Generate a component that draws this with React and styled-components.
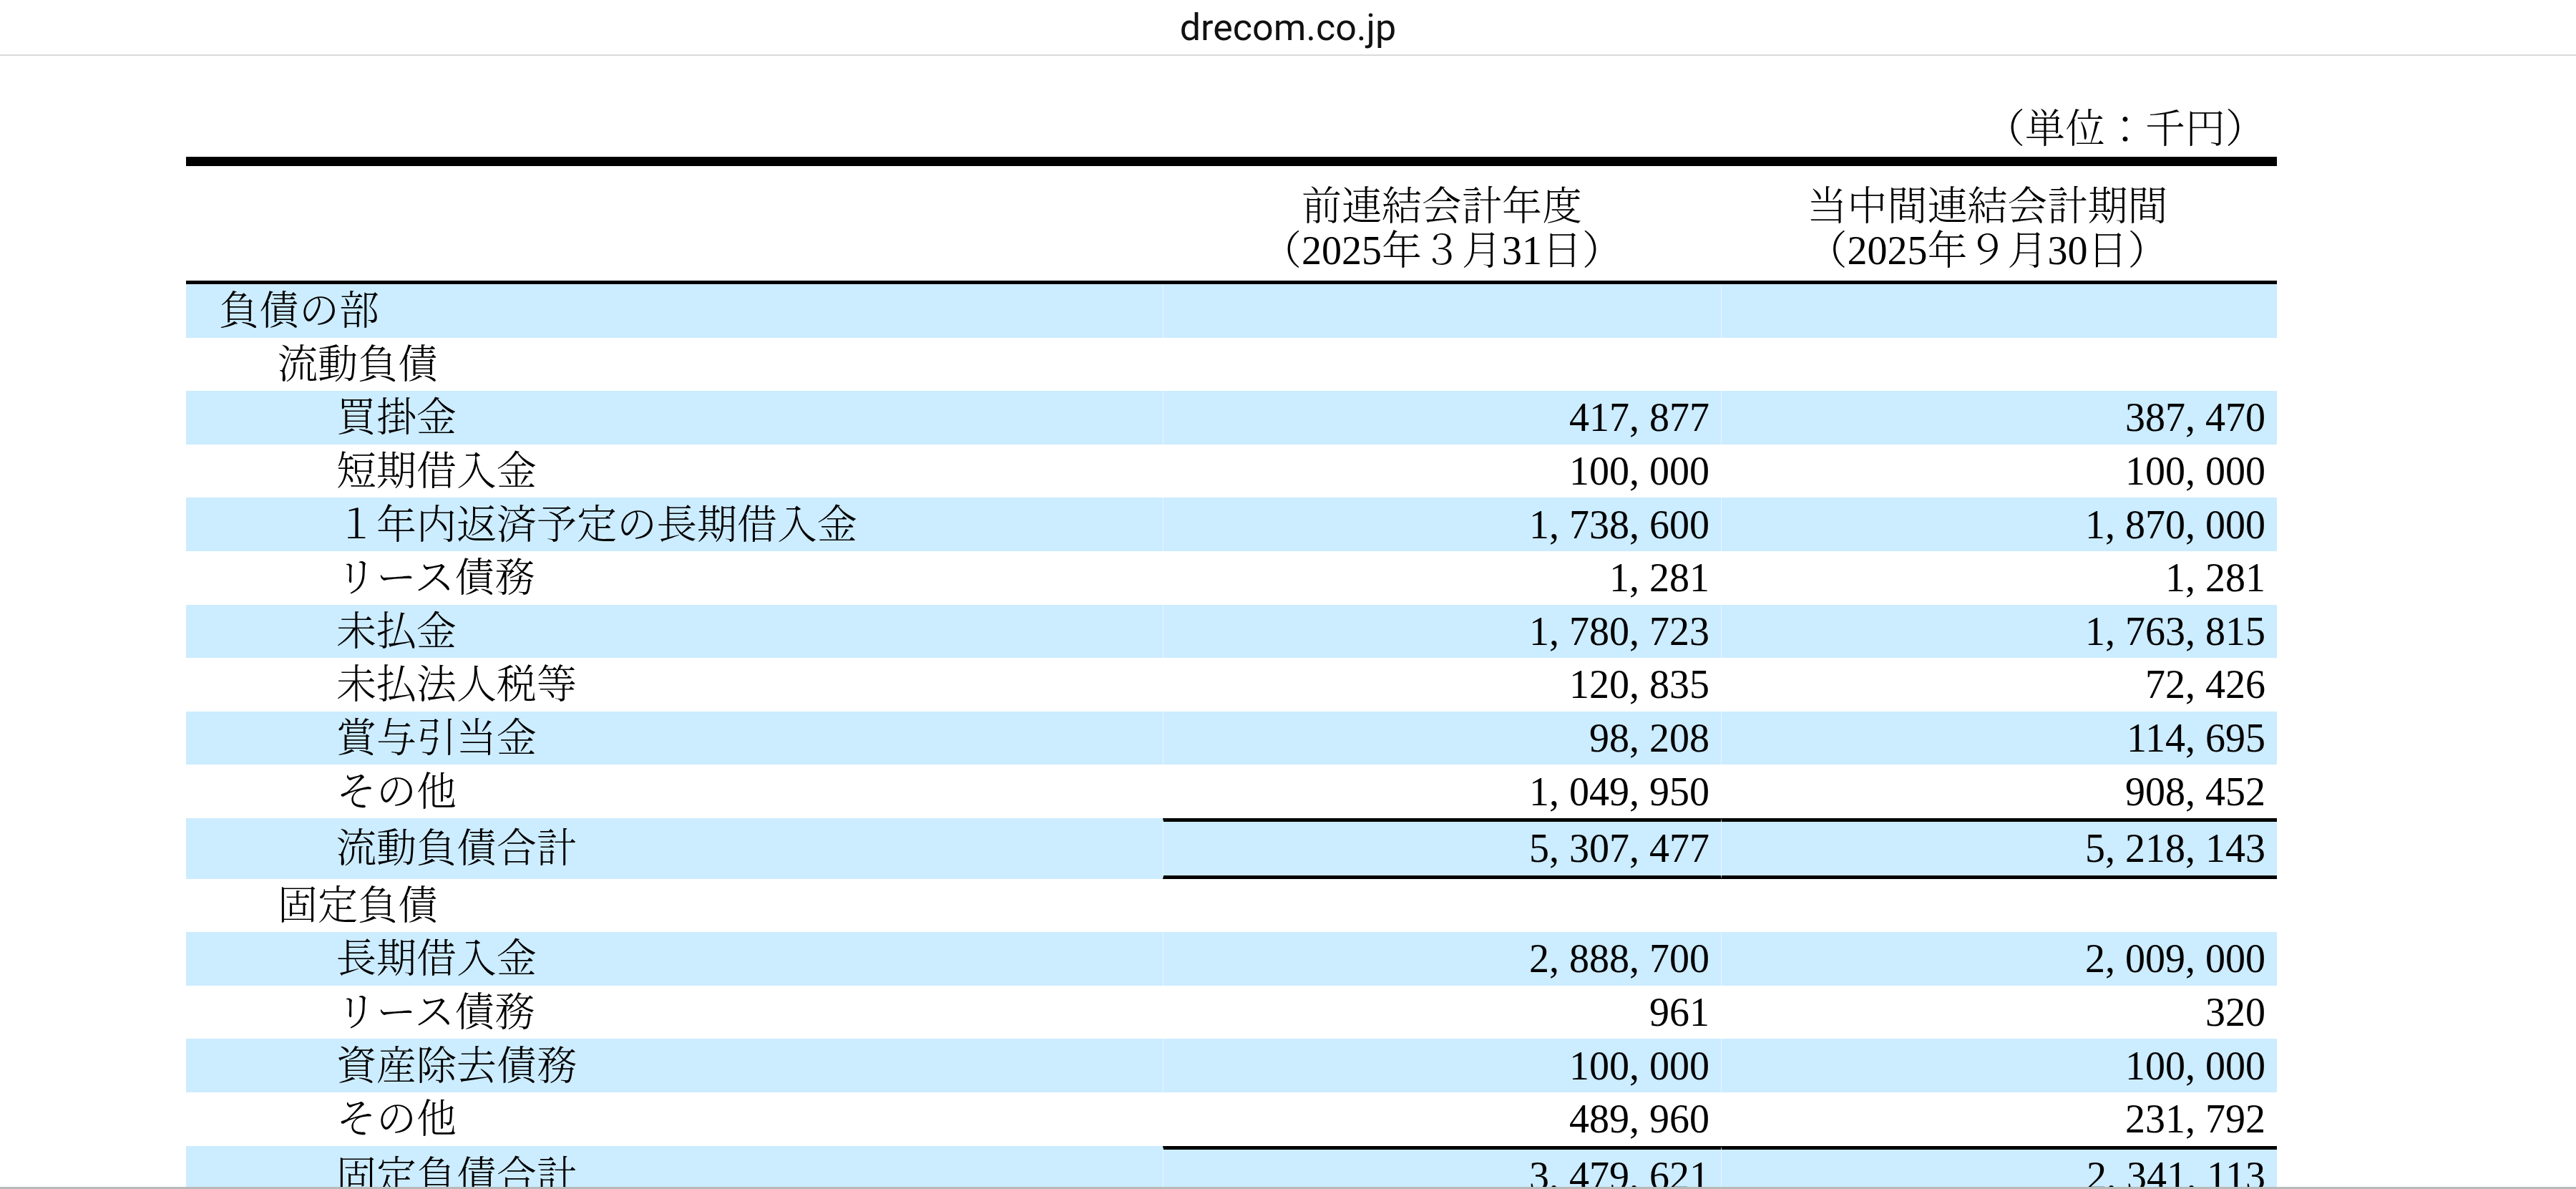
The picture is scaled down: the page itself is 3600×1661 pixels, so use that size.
import React from "react"
import styled, { createGlobalStyle } from "styled-components"

const SERIF = `"Liberation Serif", "Noto Serif CJK JP", "Noto Sans CJK JP", serif`
const BLUE = "#ccecff"
const ROW_H = "74.6px"

const GlobalStyle = createGlobalStyle`
  html, body {
    margin: 0;
    padding: 0;
    background: #ffffff;
    overflow: hidden;
  }
`

const Page = styled.div`
  width: 3600px;
  height: 1661px;
  overflow: hidden;
  background: #ffffff;
`

const AddressBar = styled.div`
  height: 76px;
  border-bottom: 2px solid #dadada;
  display: flex;
  align-items: center;
  justify-content: center;
  font-family: Roboto, "Liberation Sans", sans-serif;
  font-size: 52px;
  color: #111111;
`

const Sheet = styled.div`
  width: 2922px;
  margin-left: 260px;
  font-family: ${SERIF};
  font-weight: 300;
  font-size: 56px;
  color: #000000;
`

const Unit = styled.div`
  margin: 71px 0 8px;
  line-height: 62px;
  text-align: right;
  padding-right: 16px;
`

const Table = styled.div`
  border-top: 13px solid #000000;
`

const Row = styled.div`
  display: grid;
  grid-template-columns: 1365px 780px 777px;
  background: ${(p) => (p.shaded ? BLUE : "#ffffff")};
`

const HeadRow = styled(Row)`
  height: 160px;
  border-bottom: 5px solid #000000;
`

const HeadCell = styled.div`
  display: flex;
  flex-direction: column;
  align-items: center;
  justify-content: center;
  line-height: 62px;
  padding-top: 14px;
  padding-right: ${(p) => p.shift || 0}px;
`

const Label = styled.div`
  display: flex;
  align-items: center;
  min-height: ${ROW_H};
  line-height: 1;
  padding-left: ${(p) => 46 + p.level * 82}px;
  white-space: nowrap;
`

const Amount = styled.div`
  display: flex;
  align-items: center;
  justify-content: flex-end;
  min-height: ${ROW_H};
  line-height: 1;
  padding-right: 16px;
  border-left: 1px solid ${(p) => (p.shaded ? "rgba(255,255,255,0.55)" : "transparent")};
  border-top: ${(p) => (p.total ? "5px solid #000000" : "none")};
  border-bottom: ${(p) => (p.total ? "5px solid #000000" : "none")};
  white-space: nowrap;
`

const Comma = styled.span`
  display: inline-block;
  width: 0.5em;
`

const BottomEdge = styled.div`
  position: fixed;
  left: 0;
  right: 0;
  bottom: 0;
  height: 3px;
  background: #b9b9b9;
`

const rows = [
  { label: "負債の部", level: 0 },
  { label: "流動負債", level: 1 },
  { label: "買掛金", level: 2, prev: "417,877", cur: "387,470" },
  { label: "短期借入金", level: 2, prev: "100,000", cur: "100,000" },
  { label: "１年内返済予定の長期借入金", level: 2, prev: "1,738,600", cur: "1,870,000" },
  { label: "リース債務", level: 2, prev: "1,281", cur: "1,281" },
  { label: "未払金", level: 2, prev: "1,780,723", cur: "1,763,815" },
  { label: "未払法人税等", level: 2, prev: "120,835", cur: "72,426" },
  { label: "賞与引当金", level: 2, prev: "98,208", cur: "114,695" },
  { label: "その他", level: 2, prev: "1,049,950", cur: "908,452" },
  { label: "流動負債合計", level: 2, prev: "5,307,477", cur: "5,218,143", total: true },
  { label: "固定負債", level: 1 },
  { label: "長期借入金", level: 2, prev: "2,888,700", cur: "2,009,000" },
  { label: "リース債務", level: 2, prev: "961", cur: "320" },
  { label: "資産除去債務", level: 2, prev: "100,000", cur: "100,000" },
  { label: "その他", level: 2, prev: "489,960", cur: "231,792" },
  { label: "固定負債合計", level: 2, prev: "3,479,621", cur: "2,341,113", total: true },
]

const Num = ({ value }) => {
  if (!value) return null
  const parts = value.split(",")
  return (
    <span>
      {parts.map((part, i) => (
        <React.Fragment key={i}>
          {part}
          {i < parts.length - 1 && <Comma>,</Comma>}
        </React.Fragment>
      ))}
    </span>
  )
}

const App = () => {
  return (
    <Page>
      <GlobalStyle />
      <AddressBar>drecom.co.jp</AddressBar>
      <Sheet>
        <Unit>（単位：千円）</Unit>
        <Table>
          <HeadRow>
            <div />
            <HeadCell>
              <span>前連結会計年度</span>
              <span>（2025年３月31日）</span>
            </HeadCell>
            <HeadCell shift={32}>
              <span>当中間連結会計期間</span>
              <span>（2025年９月30日）</span>
            </HeadCell>
          </HeadRow>
          {rows.map((row, index) => {
            const shaded = index % 2 === 0
            return (
              <Row key={index} shaded={shaded}>
                <Label level={row.level}>{row.label}</Label>
                <Amount shaded={shaded} total={row.total}>
                  <Num value={row.prev} />
                </Amount>
                <Amount shaded={shaded} total={row.total}>
                  <Num value={row.cur} />
                </Amount>
              </Row>
            )
          })}
        </Table>
      </Sheet>
      <BottomEdge />
    </Page>
  )
}

export default App
